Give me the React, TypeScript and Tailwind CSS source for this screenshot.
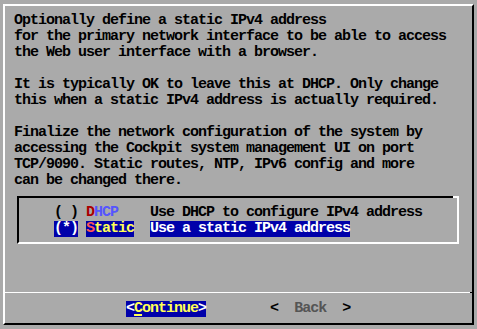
import React from 'react';

const mono = "font-['Liberation_Mono','DejaVu_Sans_Mono',monospace] text-[15px] leading-[16px] tracking-[-1px] font-bold";

const paragraphs = [
  'Optionally define a static IPv4 address',
  'for the primary network interface to be able to access',
  'the Web user interface with a browser.',
  '',
  'It is typically OK to leave this at DHCP. Only change',
  'this when a static IPv4 address is actually required.',
  '',
  'Finalize the network configuration of the system by',
  'accessing the Cockpit system management UI on port',
  'TCP/9090. Static routes, NTP, IPv6 config and more',
  'can be changed there.',
];

export default function App() {
  return (
    <div className={`w-[477px] h-[329px] bg-[#aaaaaa] pt-[4px] pl-[3px] overflow-hidden text-black ${mono}`}>
      <div className="w-[471px] h-[321px] flex flex-col border-t-2 border-l-2 border-t-white border-l-white border-r-2 border-b-2 border-r-black border-b-black">
        <div className="pl-[9px] pt-[7px]">
          {paragraphs.map((line, i) => (
            <div key={i} className="h-[16px] whitespace-pre">
              {line}
            </div>
          ))}

          {/* radio list */}
          <div className="relative mt-[7px] ml-[3px] w-[442px] pt-[7px] pb-[5px] pl-[35px] border-t-2 border-l-2 border-t-black border-l-black border-r-2 border-b-2 border-r-white border-b-white">
            <span className="absolute -top-[2px] -right-[2px] w-[6px] h-[2px] bg-white" />
            <div className="h-[16px] whitespace-pre">
              {'( ) '}
              <span className="text-[#aa0000]">D</span>
              <span className="text-[#5555ff]">HCP</span>
              {'    Use DHCP to configure IPv4 address'}
            </div>
            <div className="h-[16px] whitespace-pre">
              <span className="inline-block h-[16px] bg-[#0000aa] text-white">(*)</span>
              {' '}
              <span className="inline-block h-[16px] bg-[#0000aa]">
                <span className="text-[#ff5555]">S</span>
                <span className="text-[#ffff55]">tatic</span>
              </span>
              {'  '}
              <span className="inline-block h-[16px] bg-[#0000aa] text-white">Use a static IPv4 address</span>
            </div>
          </div>
        </div>

        {/* separator */}
        <div className="mt-[48px] h-px flex">
          <div className="flex-1 bg-white" />
          <div className="w-[2px] bg-black" />
        </div>

        {/* buttons */}
        <div className="pl-[9px] mt-[8px] h-[16px] whitespace-pre">
          {'              '}
          <span className="inline-block h-[16px] bg-[#0000aa]">
            <span className="text-white">{'<'}</span>
            <span className="text-[#ffff55] underline decoration-2 underline-offset-2">C</span>
            <span className="text-[#ffff55]">ontinue</span>
            <span className="text-white">{'>'}</span>
          </span>
          {'        <  '}
          <span className="text-[#555555]">Back</span>
          {'  >'}
        </div>
      </div>
    </div>
  );
}
